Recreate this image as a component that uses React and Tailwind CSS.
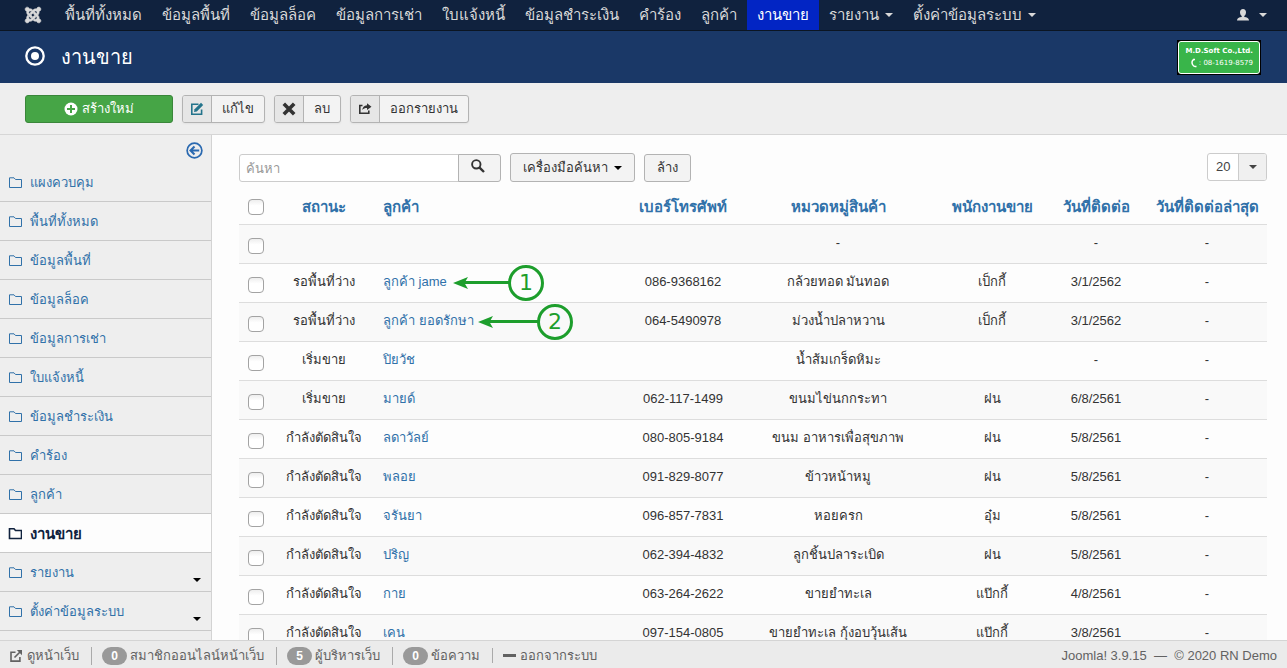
import React from "react";
import { FaJoomla } from "react-icons/fa";

const navItems = [
  { label: "พื้นที่ทั้งหมด" },
  { label: "ข้อมูลพื้นที่" },
  { label: "ข้อมูลล็อค" },
  { label: "ข้อมูลการเช่า" },
  { label: "ใบแจ้งหนี้" },
  { label: "ข้อมูลชำระเงิน" },
  { label: "คำร้อง" },
  { label: "ลูกค้า" },
  { label: "งานขาย", active: true },
  { label: "รายงาน", menu: true },
  { label: "ตั้งค่าข้อมูลระบบ", menu: true },
];

const sideItems = [
  { label: "แผงควบคุม" },
  ...navItems,
];

const rows = [
  { status: "", customer: "", phone: "", category: "-", seller: "", date: "-" },
  { status: "รอพื้นที่ว่าง", customer: "ลูกค้า jame", phone: "086-9368162", category: "กล้วยทอด มันทอด", seller: "เป็กกี้", date: "3/1/2562", mark: 1 },
  { status: "รอพื้นที่ว่าง", customer: "ลูกค้า ยอดรักษา", phone: "064-5490978", category: "ม่วงน้ำปลาหวาน", seller: "เป็กกี้", date: "3/1/2562", mark: 2 },
  { status: "เริ่มขาย", customer: "ปิยวัช", phone: "", category: "น้ำส้มเกร็ดหิมะ", seller: "", date: "-" },
  { status: "เริ่มขาย", customer: "มายด์", phone: "062-117-1499", category: "ขนมไข่นกกระทา", seller: "ฝน", date: "6/8/2561" },
  { status: "กำลังตัดสินใจ", customer: "ลดาวัลย์", phone: "080-805-9184", category: "ขนม อาหารเพื่อสุขภาพ", seller: "ฝน", date: "5/8/2561" },
  { status: "กำลังตัดสินใจ", customer: "พลอย", phone: "091-829-8077", category: "ข้าวหน้าหมู", seller: "ฝน", date: "5/8/2561" },
  { status: "กำลังตัดสินใจ", customer: "จรันยา", phone: "096-857-7831", category: "หอยครก", seller: "อุ๋ม", date: "5/8/2561" },
  { status: "กำลังตัดสินใจ", customer: "ปริญ", phone: "062-394-4832", category: "ลูกชิ้นปลาระเบิด", seller: "ฝน", date: "5/8/2561" },
  { status: "กำลังตัดสินใจ", customer: "กาย", phone: "063-264-2622", category: "ขายยำทะเล", seller: "แป๊กกี้", date: "4/8/2561" },
  { status: "กำลังตัดสินใจ", customer: "เคน", phone: "097-154-0805", category: "ขายยำทะเล กุ้งอบวุ้นเส้น", seller: "แป๊กกี้", date: "3/8/2561" },
];

function Caret({ className = "" }) {
  return (
    <svg viewBox="0 0 8 4" aria-hidden="true" className={"h-1 w-2 shrink-0 fill-current " + className}>
      <path d="M0 0h8L4 4z" />
    </svg>
  );
}

function Folder({ bold }) {
  return (
    <svg viewBox="0 0 14 12" aria-hidden="true" className="h-3 w-3.5 shrink-0" fill="none" stroke="currentColor" strokeWidth={bold ? 1.6 : 1}>
      <path d="M1.500 10.500V.8h4.500l1.500 1.700h6v8z" />
    </svg>
  );
}

function TopBar() {
  return (
    <nav className="flex h-[31px] shrink-0 items-stretch border-b border-[#0b1522] bg-[#10223e] text-[15px] leading-[30px] text-[#d9d9d9]">
      <a href="#home" aria-label="Joomla" className="flex items-center pl-6 pr-[13px]">
        <FaJoomla className="size-[18px]" stroke="currentColor" strokeWidth="16" />
      </a>
      {navItems.map((item) => (
        <a
          key={item.label}
          href="#nav"
          className={"flex items-center gap-1.5 whitespace-nowrap px-2.5 " + (item.active ? "bg-[#0225c4] text-white" : "")}
        >
          {item.label}
          {item.menu && <Caret />}
        </a>
      ))}
      <button type="button" aria-label="User menu" className="ml-auto flex items-center gap-2.5 pr-5">
        <svg viewBox="0 0 12 12" aria-hidden="true" className="size-3 fill-current">
          <path d="M6 0c1.900 0 3 1.300 3 3.200c0 1.500-.6 3-1.700 3.800v1c2.700.3 4.700 1.200 4.700 3.500H0C0 9.200 2 8.300 4.700 8V7C3.600 6.200 3 4.700 3 3.200 3 1.300 4.100 0 6 0z" />
        </svg>
        <Caret />
      </button>
    </nav>
  );
}

function Header() {
  return (
    <header className="flex h-[52px] shrink-0 items-center justify-between bg-[#1a3867] pl-[25px] pr-[26px] text-white">
      <h1 className="flex items-center gap-4 text-xl leading-9 font-normal">
        <svg viewBox="0 0 20 22" aria-hidden="true" className="h-[22px] w-5">
          <circle cx="10" cy="10" r="8.700" fill="none" stroke="currentColor" strokeWidth="2.300" />
          <circle cx="10" cy="10" r="4" fill="currentColor" />
        </svg>
        งานขาย
      </h1>
      <div className="border border-black bg-black">
        <div className="flex h-[33px] w-[82px] flex-col items-end justify-center rounded-[3px] border border-white bg-[#39b54a] pr-1.5 font-['DejaVu_Sans',sans-serif] text-[7px] leading-3 whitespace-nowrap">
          <div className="font-bold">M.D.Soft Co.,Ltd.</div>
          <div className="flex items-center gap-0.5">
            <svg viewBox="0 0 8 10" aria-hidden="true" className="h-2.5 w-2" fill="none" stroke="currentColor" strokeWidth="1.500">
              <path d="M5 1.500C3 2 2.500 4.500 3.500 6.500c.8 1.600 1.800 2.200 3.200 1.900M4 1.500h2M5.500 8.500h2" />
            </svg>
            : 08-1619-8579
          </div>
        </div>
      </div>
    </header>
  );
}

function ToolButton({ icon, children }) {
  return (
    <button type="button" className="flex h-7 items-stretch overflow-hidden rounded-[3px] border border-[#b3b3b3] bg-[#f3f3f3] text-[#333] shadow-[0_1px_2px_rgba(0,0,0,0.05)]">
      <span className="flex w-[29px] items-center justify-center border-r border-[#b3b3b3] bg-[#e6e6e6]">{icon}</span>
      <span className="px-2.5 leading-[26px]">{children}</span>
    </button>
  );
}

function Toolbar() {
  return (
    <div className="flex h-[52px] shrink-0 items-start gap-[9px] border-b border-[#d6d6d6] bg-[#eee] px-[25px] pt-3">
      <button type="button" className="flex h-7 w-[148px] items-center justify-center gap-1 rounded-[3px] border border-[#3a863a] bg-[#46a546] text-white">
        <svg viewBox="0 0 14 14" aria-hidden="true" className="size-3.5">
          <circle cx="7" cy="7" r="6.500" fill="white" />
          <path d="M7 3v8M3 7h8" stroke="#46a546" strokeWidth="2" />
        </svg>
        สร้างใหม่
      </button>
      <ToolButton
        icon={
          <svg viewBox="0 0 14 14" aria-hidden="true" className="size-3.5 text-[#24748c]" fill="none" stroke="currentColor">
            <path d="M8.500 2.200H1.800v10h9.800V7.500" strokeWidth="1.600" />
            <path d="M4 10l.6-2.800L11 .8 13.200 3 6.800 9.400z" fill="currentColor" stroke="none" />
          </svg>
        }
      >
        แก้ไข
      </ToolButton>
      <ToolButton
        icon={
          <svg viewBox="0 0 14 14" aria-hidden="true" className="size-3.5" stroke="currentColor" strokeWidth="3.600">
            <path d="M1.800 1.800l10.400 10.400M12.200 1.800L1.800 12.200" />
          </svg>
        }
      >
        ลบ
      </ToolButton>
      <ToolButton
        icon={
          <svg viewBox="0 0 14 14" aria-hidden="true" className="size-3.5" fill="none" stroke="currentColor" strokeWidth="1.600">
            <path d="M4.500 3.500H1.800v7.700h9V8.500" />
            <path d="M9 1.200l4.500 3.500L9 8V6C7 6 5.500 6.400 4.300 8c.2-2.600 1.700-4.500 4.700-4.700z" fill="currentColor" stroke="none" />
          </svg>
        }
      >
        ออกรายงาน
      </ToolButton>
    </div>
  );
}

function Sidebar() {
  return (
    <aside className="w-[212px] shrink-0 border-r border-[#d3d3d3] bg-[#eee]">
      <div className="flex h-7 items-end justify-end pr-2 pb-1">
        <button type="button" aria-label="Toggle sidebar" className="text-[#2a69b0]">
          <svg viewBox="0 0 18 18" aria-hidden="true" className="size-[17px]" fill="none" stroke="currentColor" strokeWidth="1.800">
            <circle cx="9" cy="9" r="7.800" />
            <path d="M14 9H5.500M9 4.800L4.800 9 9 13.200" strokeWidth="2.200" />
          </svg>
        </button>
      </div>
      <ul>
        {sideItems.map((item) => (
          <li key={item.label} className="border-b border-[#c9c9c9]">
            <a
              href="#section"
              className={
                "flex h-[38px] items-center gap-2 pt-px pr-2.5 pl-2 " +
                (item.active ? "bg-[#fdfdfd] text-[15px] font-bold text-[#10223e]" : "text-[#3071a9]")
              }
            >
              <Folder bold={item.active} />
              <span>{item.label}</span>
              {item.menu && <Caret className="mt-3.5 ml-auto text-black" />}
            </a>
          </li>
        ))}
      </ul>
    </aside>
  );
}

function Checkbox({ label }) {
  return (
    <input
      type="checkbox"
      aria-label={label}
      className="block size-4 appearance-none rounded-[4px] border border-[#a3a3a3] bg-linear-to-b from-[#eee] to-white to-40% checked:bg-[#3071a9]"
    />
  );
}

function Mark({ number }) {
  return (
    <span
      className={
        "absolute top-0 flex h-[37px] items-center pt-px font-['DejaVu_Sans',sans-serif] text-[22px] leading-none text-[#1d9e2c] " +
        (number === 1 ? "left-[78px]" : "left-[103px]")
      }
    >
      <svg viewBox="0 0 15 12" aria-hidden="true" className="h-3 w-[15px] shrink-0 fill-current">
        <path d="M0 6L15 0 11.500 6l3.500 6z" />
      </svg>
      <span className={"-ml-1 h-[3px] bg-current " + (number === 1 ? "w-[45px]" : "w-[49px]")} />
      <span className="-ml-px flex size-9 items-center justify-center rounded-full border-3 border-current">{number}</span>
    </span>
  );
}

function SearchBar() {
  return (
    <form className="flex items-end" onSubmit={(e) => e.preventDefault()}>
      <input
        type="text"
        aria-label="ค้นหา"
        placeholder="ค้นหา"
        className="h-7 w-[220px] rounded-l-[3px] border border-[#ccc] bg-white px-1.5 placeholder:text-[#999]"
      />
      <button type="submit" aria-label="ค้นหา" className="-ml-px flex h-7 w-[43px] items-center justify-center rounded-r-[3px] border border-[#b3b3b3] bg-[#f3f3f3] pr-1 pb-1 text-[#333]">
        <svg viewBox="0 0 14 14" aria-hidden="true" className="size-3.5" fill="none" stroke="currentColor">
          <circle cx="5.300" cy="5.300" r="4.200" strokeWidth="1.900" />
          <path d="M8.300 8.300l4.700 4.700" strokeWidth="2.400" />
        </svg>
      </button>
      <button type="button" className="ml-[9px] flex h-[29px] items-center gap-1.5 rounded-[3px] border border-[#b3b3b3] bg-[#f3f3f3] px-3 text-[#333]">
        เครื่องมือค้นหา
        <Caret className="text-black" />
      </button>
      <button type="button" className="ml-[9px] h-7 rounded-[3px] border border-[#b3b3b3] bg-[#f3f3f3] px-3 text-[#333]">
        ล้าง
      </button>
      <div className="relative mb-px ml-auto flex h-7 w-[60px] overflow-hidden rounded-[3px] border border-[#ccc] bg-white text-[#444]">
        <select aria-label="จำนวนรายการ" defaultValue="20" className="w-full appearance-none bg-transparent pl-2">
          <option>5</option>
          <option>10</option>
          <option>20</option>
          <option>50</option>
        </select>
        <span className="pointer-events-none absolute inset-y-0 right-0 flex w-7 items-center justify-center border-l border-[#ccc] bg-[#f0f0f0]">
          <Caret />
        </span>
      </div>
    </form>
  );
}

function SalesTable() {
  return (
    <table className="w-full table-fixed border-collapse text-center">
      <colgroup>
        <col className="w-[34px]" />
        <col className="w-[102px]" />
        <col />
        <col className="w-[108px]" />
        <col className="w-[202px]" />
        <col className="w-[106px]" />
        <col className="w-[102px]" />
        <col className="w-[120px]" />
      </colgroup>
      <thead className="text-[15px] whitespace-nowrap text-[#3071a9]">
        <tr className="h-[42px]">
          <th className="pt-2 pl-[9px]"><Checkbox label="เลือกทั้งหมด" /></th>
          <th className="pt-2">สถานะ</th>
          <th className="pt-2 pl-2 text-left">ลูกค้า</th>
          <th className="pt-2">เบอร์โทรศัพท์</th>
          <th className="pt-2">หมวดหมู่สินค้า</th>
          <th className="pt-2">พนักงานขาย</th>
          <th className="pt-2">วันที่ติดต่อ</th>
          <th className="pt-2">วันที่ติดต่อล่าสุด</th>
        </tr>
      </thead>
      <tbody>
        {rows.map((row, i) => (
          <tr key={i} className="h-[39px] border-t border-[#ddd] odd:bg-[#f9f9f9]">
            <td className="pt-1 pl-[9px]"><Checkbox label={"เลือก " + row.customer} /></td>
            <td className="pb-0.5 whitespace-nowrap">{row.status}</td>
            <td className="relative pb-0.5 pl-2 text-left">
              <a href="#customer" className="text-[#3071a9]">{row.customer}</a>
              {row.mark && <Mark number={row.mark} />}
            </td>
            <td className="pb-0.5">{row.phone}</td>
            <td className="pb-0.5 whitespace-nowrap">{row.category}</td>
            <td className="pb-0.5">{row.seller}</td>
            <td className="pb-0.5">{row.date}</td>
            <td className="pb-0.5">-</td>
          </tr>
        ))}
      </tbody>
    </table>
  );
}

function Count({ value, children }) {
  return (
    <span className="flex items-center gap-[3px] border-l border-[#aaa] pl-2.5 leading-[15px]">
      <span className="flex h-[18px] w-[25px] items-center justify-center rounded-full bg-[#999] text-xs font-bold text-white">{value}</span>
      {children}
    </span>
  );
}

function StatusBar() {
  return (
    <footer className="flex h-7 shrink-0 items-center justify-between border-t border-[#d4d4d4] bg-[#ebebeb] px-2.5 pt-0.5 text-[#626262]">
      <div className="flex items-center gap-3 whitespace-nowrap">
        <a href="#site" className="flex items-center gap-[5px]">
          <svg viewBox="0 0 12 12" aria-hidden="true" className="size-3" fill="none" stroke="currentColor" strokeWidth="1.600">
            <path d="M5.500 2.200H1v8.900h8.900V7M4.500 7.500L10 2" />
            <path d="M6.800 0H12v5.200z" fill="currentColor" stroke="none" />
          </svg>
          ดูหน้าเว็บ
        </a>
        <Count value="0">สมาชิกออนไลน์หน้าเว็บ</Count>
        <Count value="5">ผู้บริหารเว็บ</Count>
        <Count value="0">ข้อความ</Count>
        <a href="#logout" className="flex items-center gap-1 border-l border-[#aaa] pl-2.5 leading-[15px]">
          <span className="h-[3px] w-[13px] bg-current" />
          ออกจากระบบ
        </a>
      </div>
      <p className="whitespace-pre">Joomla! 3.9.15  —  © 2020 RN Demo</p>
    </footer>
  );
}

export default function App() {
  return (
    <div className="flex h-screen flex-col bg-[#fdfdfd] font-['Liberation_Sans',sans-serif] text-[13px] leading-[18px] text-[#333]">
      <TopBar />
      <Header />
      <Toolbar />
      <div className="flex min-h-0 flex-1 overflow-hidden">
        <Sidebar />
        <main className="min-w-0 flex-1 pt-[18px] pr-5 pl-[27px]">
          <SearchBar />
          <SalesTable />
        </main>
      </div>
      <StatusBar />
    </div>
  );
}
